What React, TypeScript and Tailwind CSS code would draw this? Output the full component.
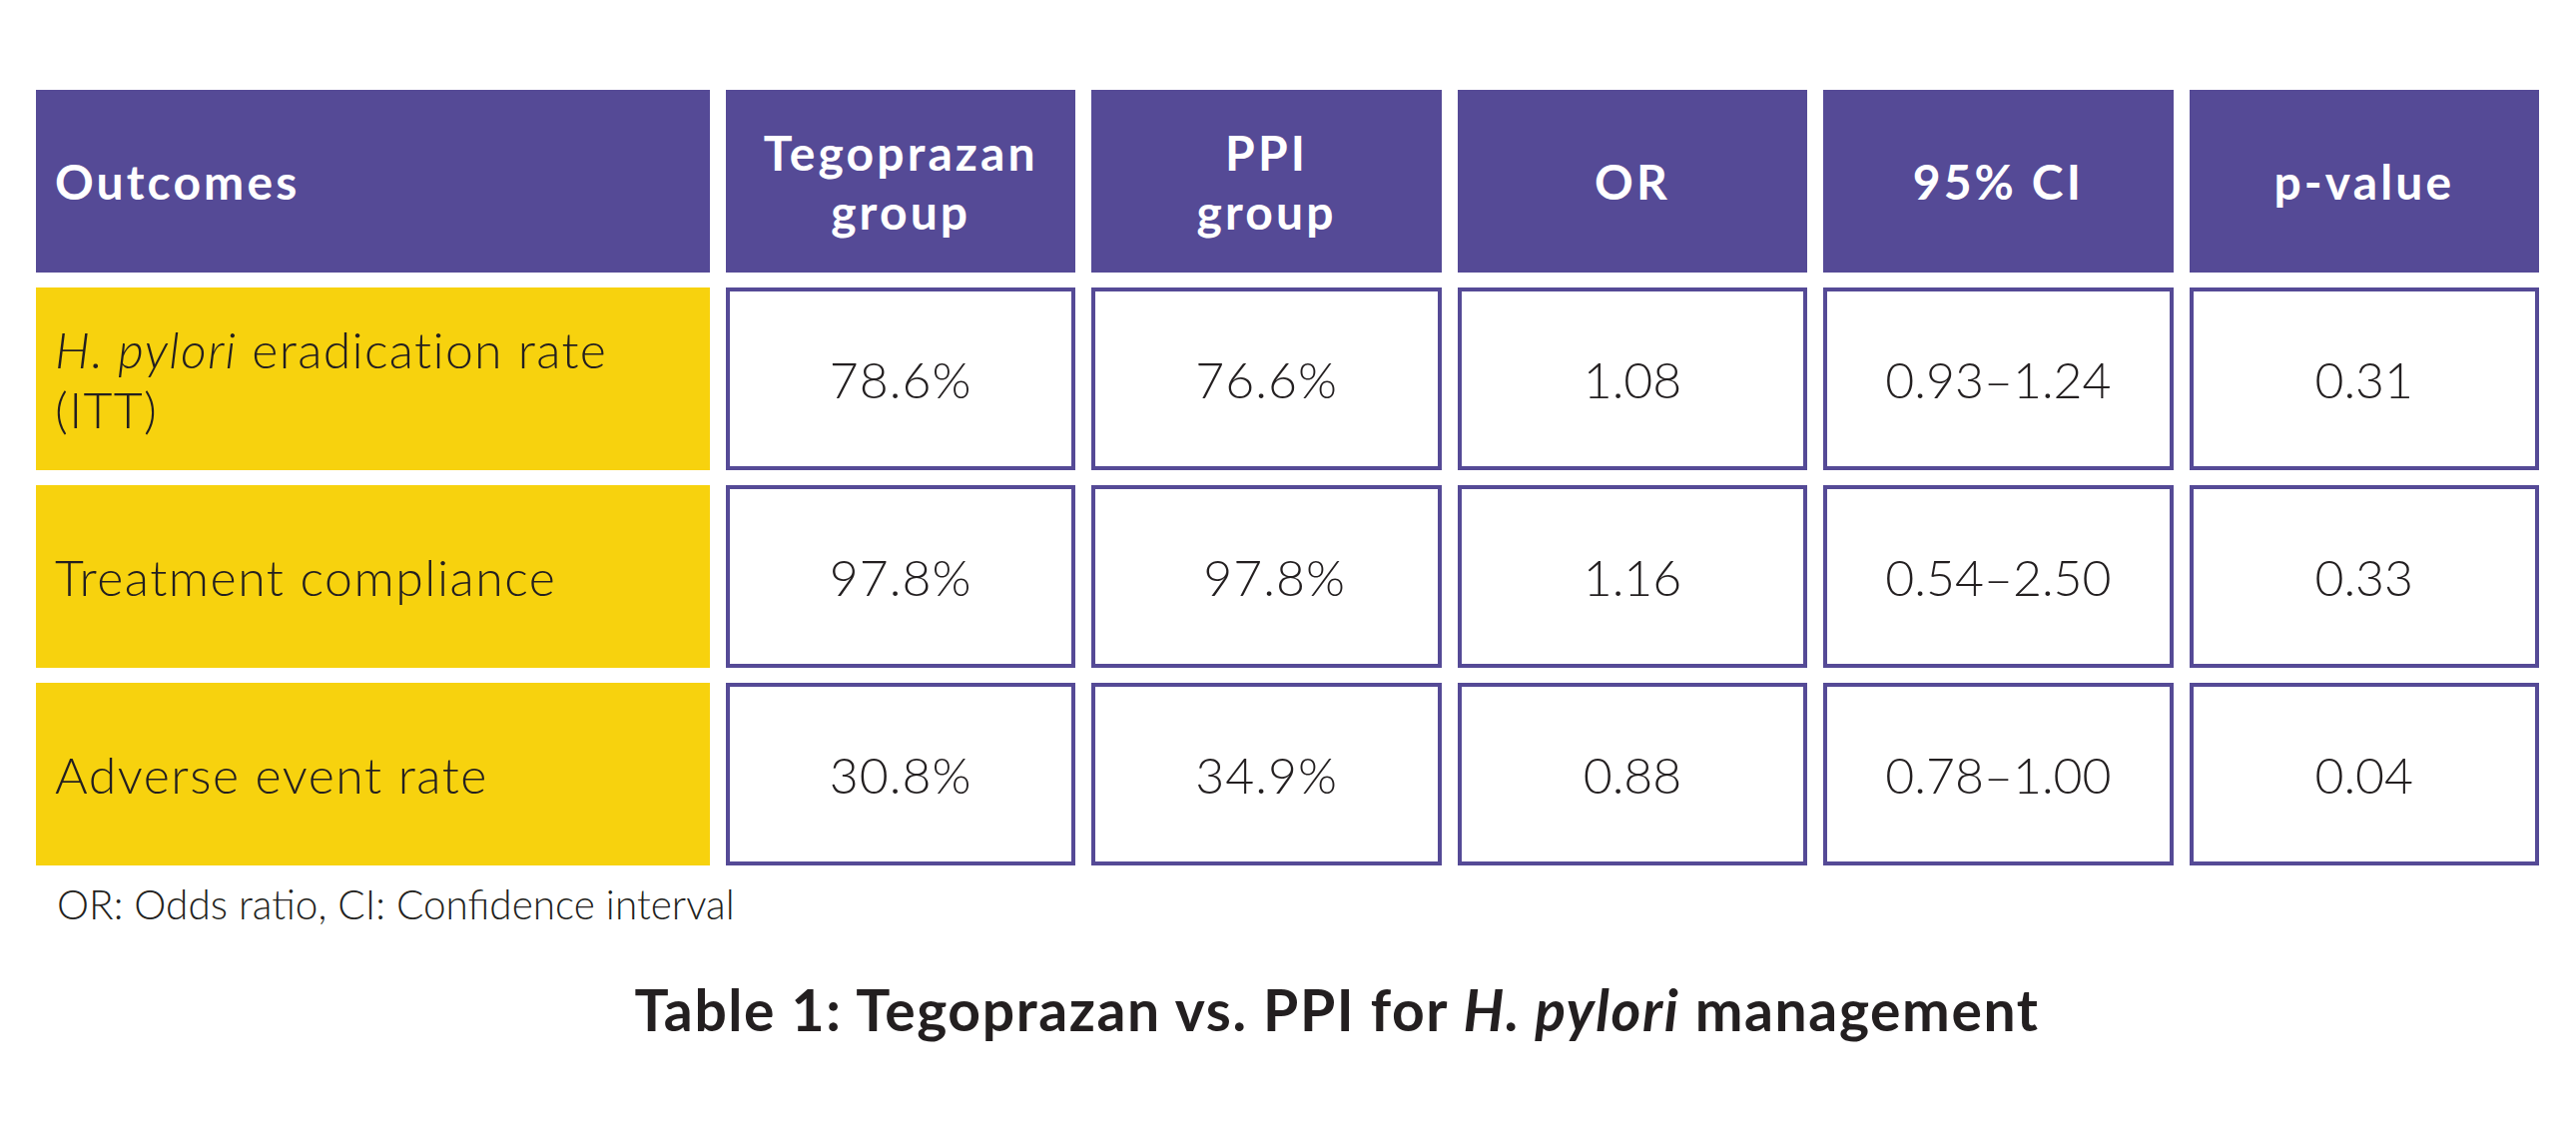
import React from "react";

const rows = [
  { label: "pylori", a: "78.6%", b: "76.6%", or: "1.08", ci: "0.93–1.24", p: "0.31" },
  { label: "Treatment compliance", a: "97.8%", b: "97.8%", or: "1.16", ci: "0.54–2.50", p: "0.33" },
  { label: "Adverse event rate", a: "30.8%", b: "34.9%", or: "0.88", ci: "0.78–1.00", p: "0.04" },
];

function HeadCell({ children, left }: { children: React.ReactNode; left?: boolean }) {
  return (
    <div
      className={
        "h-[183px] bg-[#554a96] text-white font-bold text-[48px] tracking-[0.065em] leading-[59px] flex items-center " +
        (left ? "justify-start pl-[19px]" : "justify-center text-center")
      }
    >
      {children}
    </div>
  );
}

function DataCell({ children, extra }: { children: React.ReactNode; extra?: string }) {
  return (
    <div
      className={
        "h-[183px] bg-white border-[4px] border-[#554a96] flex items-center justify-center text-[50px] font-light text-[#231f20] leading-none " +
        (extra ?? "")
      }
    >
      {children}
    </div>
  );
}

export default function App() {
  return (
    <div className="w-[2580px] h-[1136px] bg-white pt-[90px]" style={{ fontFamily: "Lato, 'Open Sans', sans-serif" }}>
      <div className="ml-[36px] w-[2507px] grid grid-cols-[675px_repeat(5,1fr)] gap-x-[16px] gap-y-[15px]">
        <HeadCell left>Outcomes</HeadCell>
        <HeadCell>
          Tegoprazan
          <br />
          group
        </HeadCell>
        <HeadCell>
          PPI
          <br />
          group
        </HeadCell>
        <HeadCell>OR</HeadCell>
        <HeadCell>95% CI</HeadCell>
        <HeadCell>p-value</HeadCell>

        {rows.map((r, i) => (
          <React.Fragment key={i}>
            <div className="h-[183px] bg-[#f7d20e] flex items-center pl-[19px] text-[50px] font-light tracking-[0.03em] text-[#231f20] leading-[60px]">
              {i === 0 ? (
                <span className="tracking-[0.026em]">
                  <em>H. pylori</em> eradication rate
                  <br />
                  (ITT)
                </span>
              ) : (
                <span>{r.label}</span>
              )}
            </div>
            <DataCell extra="tracking-[0.02em]">{r.a}</DataCell>
            <DataCell extra={i === 1 ? "tracking-[0.02em] pl-[16px]" : "tracking-[0.02em]"}>{r.b}</DataCell>
            <DataCell>{r.or}</DataCell>
            <DataCell>{r.ci}</DataCell>
            <DataCell>{r.p}</DataCell>
          </React.Fragment>
        ))}
      </div>

      <div className="mt-[19px] pl-[57px] text-[40.5px] leading-none font-light text-[#231f20]">
        OR: Odds ratio, CI: Confidence interval
      </div>

      <div className="mt-[56px] flex justify-center pl-[98px] text-[57px] tracking-[0.028em] leading-none font-bold text-[#231f20]">
        <span>
          Table 1: Tegoprazan vs. PPI for <em>H. pylori</em> management
        </span>
      </div>
    </div>
  );
}
